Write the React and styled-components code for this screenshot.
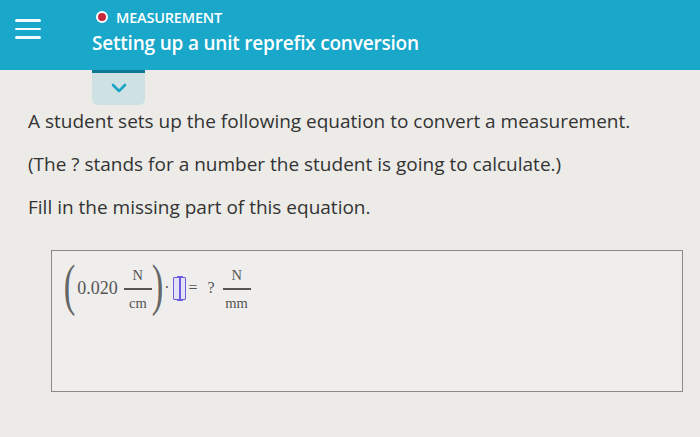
import styled, { createGlobalStyle } from "styled-components";

const GlobalStyle = createGlobalStyle`
  html, body {
    margin: 0;
    padding: 0;
    background: #ecebe8;
  }
  body {
    font-family: "Open Sans", "Liberation Sans", sans-serif;
    color: #333;
  }
`;

function App() {
  return (
    <>
      <GlobalStyle />
      <Page>
        <Header>
          <Hamburger>
            <span />
            <span />
            <span />
          </Hamburger>
          <TitleBlock>
            <Topic>
              <TopicDot />
              MEASUREMENT
            </Topic>
            <Title>Setting up a unit reprefix conversion</Title>
          </TitleBlock>
        </Header>

        <Tab>
          <svg width="16" height="10" viewBox="0 0 16 10">
            <path
              d="M2 2 L8 8 L14 2"
              fill="none"
              stroke="#1aa3c6"
              strokeWidth="2.6"
              strokeLinecap="round"
              strokeLinejoin="round"
            />
          </svg>
        </Tab>

        <Content>
          <Para>A student sets up the following equation to convert a measurement.</Para>
          <Para>(The ? stands for a number the student is going to calculate.)</Para>
          <Para>Fill in the missing part of this equation.</Para>

          <AnswerBox>
            <Equation>
              <Paren>(</Paren>
              <Num>0.020</Num>
              <Fraction>
                <Numer>N</Numer>
                <Bar />
                <Denom>cm</Denom>
              </Fraction>
              <Paren>)</Paren>
              <Dot>·</Dot>
              <InputSlot>
                <Caret />
              </InputSlot>
              <Sign>=</Sign>
              <Sign $wide>?</Sign>
              <Fraction>
                <Numer>N</Numer>
                <Bar />
                <Denom>mm</Denom>
              </Fraction>
            </Equation>
          </AnswerBox>
        </Content>
      </Page>
    </>
  );
}

export default App;

const Page = styled.div`
  width: 700px;
  height: 437px;
  overflow: hidden;
`;

const Header = styled.header`
  height: 70px;
  background: #19a8ca;
  display: flex;
  align-items: flex-start;
  padding-left: 15px;
  box-sizing: border-box;
`;

const Hamburger = styled.div`
  width: 26px;
  margin-top: 19px;
  display: flex;
  flex-direction: column;
  gap: 6px;
  span {
    display: block;
    height: 2.5px;
    border-radius: 2px;
    background: #f4fbfd;
  }
`;

const TitleBlock = styled.div`
  margin-left: 51px;
  padding-top: 7px;
  display: flex;
  flex-direction: column;
`;

const Topic = styled.div`
  display: flex;
  align-items: center;
  gap: 8px;
  padding-left: 4px;
  font-size: 14.5px;
  font-weight: 600;
  color: #ffffff;
  letter-spacing: -0.2px;
  height: 20px;
`;

const TopicDot = styled.span`
  width: 8px;
  height: 8px;
  border-radius: 50%;
  background: #c8283c;
  border: 2px solid #ffffff;
`;

const Title = styled.div`
  margin-top: 3px;
  font-size: 19px;
  font-weight: 600;
  color: #ffffff;
  letter-spacing: -0.2px;
`;

const Tab = styled.div`
  margin-left: 92px;
  width: 53px;
  height: 32px;
  background: #cfe2e3;
  border-top: 3px solid #0f7893;
  border-radius: 0 0 6px 6px;
  display: flex;
  align-items: center;
  justify-content: center;
  svg {
    margin-top: -3px;
  }
`;

const Content = styled.main`
  padding: 4px 0 0 28px;
`;

const Para = styled.p`
  margin: 0 0 19px;
  font-size: 19px;
  line-height: 24px;
  color: #333;
`;

const AnswerBox = styled.div`
  margin: 31px 0 0 23px;
  width: 632px;
  height: 142px;
  box-sizing: border-box;
  border: 1.5px solid #8a8a8c;
  background: #efeeec;
  padding: 10px 12px;
`;

const Equation = styled.div`
  display: flex;
  align-items: center;
  font-family: "Liberation Serif", "Times New Roman", serif;
  color: #555;
  font-size: 17px;
  height: 54px;
`;

const Paren = styled.span`
  font-size: 58px;
  font-weight: 100;
  line-height: 54px;
  color: #666;
  transform: scaleX(0.6);
  margin: -6px -4px 0;
`;

const Num = styled.span`
  margin: 0 6px 0 2px;
  font-size: 18px;
`;

const Fraction = styled.span`
  display: inline-flex;
  flex-direction: column;
  align-items: center;
  font-size: 14.5px;
  margin-top: 2px;
`;

const Numer = styled.span`
  line-height: 20px;
  padding: 0 2px 3px;
`;

const Denom = styled.span`
  line-height: 20px;
  padding: 3px 2px 0;
`;

const Bar = styled.i`
  display: block;
  align-self: stretch;
  height: 1.5px;
  background: #555;
  min-width: 28px;
`;

const Dot = styled.span`
  margin: 0 4px 0 1px;
  font-size: 16px;
`;

const InputSlot = styled.span`
  position: relative;
  width: 11px;
  height: 21px;
  border: 1.5px solid #6c5ce0;
  background: #e4e2f5;
  border-radius: 1px;
  display: flex;
  justify-content: center;
`;

const Caret = styled.span`
  width: 1.5px;
  height: 100%;
  background: #6c5ce0;
  &::before,
  &::after {
    content: "";
    position: absolute;
    left: 50%;
    width: 6px;
    height: 1.5px;
    margin-left: -3px;
    background: #6c5ce0;
  }
  &::before {
    top: -2px;
  }
  &::after {
    bottom: -2px;
  }
`;

const Sign = styled.span`
  margin: 0 ${(p) => (p.$wide ? "8px" : "4px")} 0 ${(p) => (p.$wide ? "6px" : "2px")};
  font-size: 16px;
`;
